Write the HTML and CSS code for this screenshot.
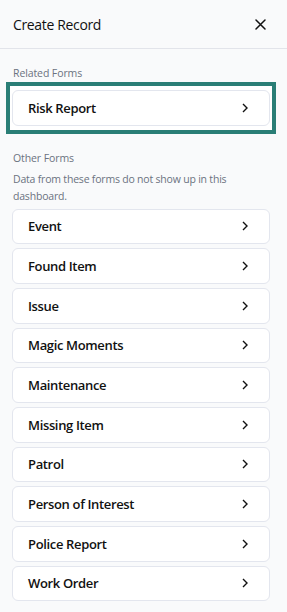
FILE: index.html
```html
<!DOCTYPE html>
<html>
<head>
<meta charset="utf-8">
<link rel="stylesheet" href="styles.css">
</head>
<body>
<div class="panel">
  <header class="header">
    <h1 class="title">Create Record</h1>
    <svg class="close" width="11" height="11" viewBox="0 0 11 11"><path d="M1 1L10 10M10 1L1 10" stroke="#111" stroke-width="1.5" stroke-linecap="round"/></svg>
  </header>
  <div class="body">
    <div class="section-label">Related Forms</div>
    <div class="highlight">
      <div class="card"><span>Risk Report</span><svg class="chev" width="6" height="10" viewBox="0 0 6 10"><path d="M1 1L5 5L1 9" fill="none" stroke="#111" stroke-width="1.4"/></svg></div>
    </div>
    <div class="section-label other">Other Forms</div>
    <p class="desc">Data from these forms do not show up in this dashboard.</p>
    <div class="list">
      <div class="card"><span>Event</span><svg class="chev" width="6" height="10" viewBox="0 0 6 10"><path d="M1 1L5 5L1 9" fill="none" stroke="#111" stroke-width="1.4"/></svg></div>
      <div class="card"><span>Found Item</span><svg class="chev" width="6" height="10" viewBox="0 0 6 10"><path d="M1 1L5 5L1 9" fill="none" stroke="#111" stroke-width="1.4"/></svg></div>
      <div class="card"><span>Issue</span><svg class="chev" width="6" height="10" viewBox="0 0 6 10"><path d="M1 1L5 5L1 9" fill="none" stroke="#111" stroke-width="1.4"/></svg></div>
      <div class="card"><span>Magic Moments</span><svg class="chev" width="6" height="10" viewBox="0 0 6 10"><path d="M1 1L5 5L1 9" fill="none" stroke="#111" stroke-width="1.4"/></svg></div>
      <div class="card"><span>Maintenance</span><svg class="chev" width="6" height="10" viewBox="0 0 6 10"><path d="M1 1L5 5L1 9" fill="none" stroke="#111" stroke-width="1.4"/></svg></div>
      <div class="card"><span>Missing Item</span><svg class="chev" width="6" height="10" viewBox="0 0 6 10"><path d="M1 1L5 5L1 9" fill="none" stroke="#111" stroke-width="1.4"/></svg></div>
      <div class="card"><span>Patrol</span><svg class="chev" width="6" height="10" viewBox="0 0 6 10"><path d="M1 1L5 5L1 9" fill="none" stroke="#111" stroke-width="1.4"/></svg></div>
      <div class="card"><span>Person of Interest</span><svg class="chev" width="6" height="10" viewBox="0 0 6 10"><path d="M1 1L5 5L1 9" fill="none" stroke="#111" stroke-width="1.4"/></svg></div>
      <div class="card"><span>Police Report</span><svg class="chev" width="6" height="10" viewBox="0 0 6 10"><path d="M1 1L5 5L1 9" fill="none" stroke="#111" stroke-width="1.4"/></svg></div>
      <div class="card"><span>Work Order</span><svg class="chev" width="6" height="10" viewBox="0 0 6 10"><path d="M1 1L5 5L1 9" fill="none" stroke="#111" stroke-width="1.4"/></svg></div>
    </div>
  </div>
</div>
</body>
</html>
```
FILE: styles.css
```css
html, body {
  margin: 0;
  padding: 0;
  background: #f9fafb;
}
body {
  font-family: "Open Sans", "Noto Sans", sans-serif;
  color: #111827;
  width: 287px;
  height: 612px;
  overflow: hidden;
}
.header {
  height: 49px;
  border-bottom: 1px solid #e2e4ea;
  display: flex;
  align-items: center;
  justify-content: space-between;
  padding: 0 21px 0 13px;
  box-sizing: border-box;
}
.title {
  margin: 0;
  font-size: 14px;
  font-weight: 400;
  color: #111;
  letter-spacing: -0.35px;
}
.close {
  display: block;
}
.body {
  padding: 17px 0 0 0;
}
.section-label {
  font-size: 10.5px;
  color: #6b7280;
  padding-left: 13px;
  line-height: 15px;
  letter-spacing: -0.1px;
}
.highlight {
  margin: 1px 0 0 6px;
  border: 4px solid #2a7e76;
  padding: 4px 2px;
  background: #fff;
  width: 270px;
  box-sizing: border-box;
}
.highlight .card {
  margin: 0;
}
.other {
  margin-top: 17px;
}
.desc {
  margin: 5px 0 0 0;
  padding: 0 13px;
  font-size: 10.5px;
  line-height: 17px;
  color: #6b7280;
  letter-spacing: -0.2px;
}
.list {
  display: flex;
  flex-direction: column;
  gap: 4px;
  padding: 4px 0 0 12px;
}
.card {
  width: 258px;
  height: 35.67px;
  box-sizing: border-box;
  background: #fff;
  border: 1px solid #e3e6ee;
  border-radius: 6px;
  display: flex;
  align-items: center;
  justify-content: space-between;
  padding: 0 21px 0 15px;
  font-size: 13px;
  font-weight: 600;
  color: #111;
  letter-spacing: -0.35px;
}
.chev {
  display: block;
}
```
